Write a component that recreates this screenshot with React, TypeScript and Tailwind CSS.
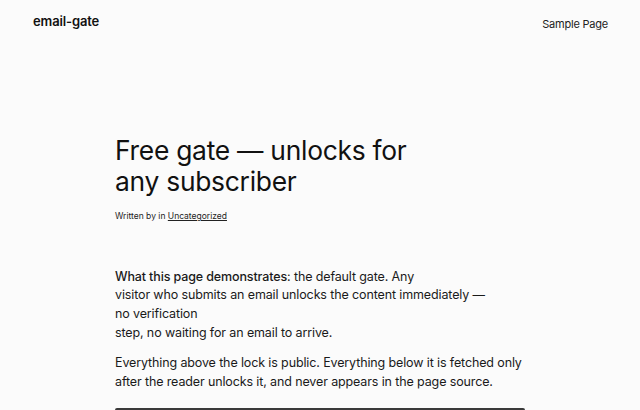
const font = { fontFamily: "Inter, 'Liberation Sans', sans-serif" };

export default function App() {
  return (
    <div className="h-screen overflow-hidden bg-[#fbfbfb] text-[#111111]" style={font}>
      <header className="flex items-center justify-between pl-[33px] pr-8 h-[44px]">
        <a href="#" className="text-[13px] font-semibold tracking-[-0.01em]">
          email-gate
        </a>
        <nav>
          <a href="#" className="text-[11px] tracking-[-0.02em] text-[#222]">
            Sample Page
          </a>
        </nav>
      </header>

      <main className="mx-auto w-[410px] pt-[91px]">
        <h1 className="text-[26.4px] leading-[31px] font-normal tracking-[-0.01em]">
          Free gate — unlocks for
          <br />
          any subscriber
        </h1>
        <p className="mt-[13px] text-[8.5px] text-[#222]">
          Written by in{" "}
          <a href="#" className="underline">
            Uncategorized
          </a>
        </p>

        <div className="mt-[45px] whitespace-nowrap text-[12.5px] leading-[18.6px] tracking-[-0.01em] text-[#1a1a1a]">
          <p>
            <strong className="font-medium">What this page demonstrates</strong>: the
            default gate. Any
            <br />
            visitor who submits an email unlocks the content immediately —
            <br />
            no verification
            <br />
            step, no waiting for an email to arrive.
          </p>
          <p className="mt-[12px]">
            Everything above the lock is public. Everything below it is fetched only
            <br />
            after the reader unlocks it, and never appears in the page source.
          </p>
        </div>

        <div className="mt-[17px] h-[40px] rounded-t-[2px] border-t-2 border-[#3a3a3a]" />
      </main>
    </div>
  );
}
